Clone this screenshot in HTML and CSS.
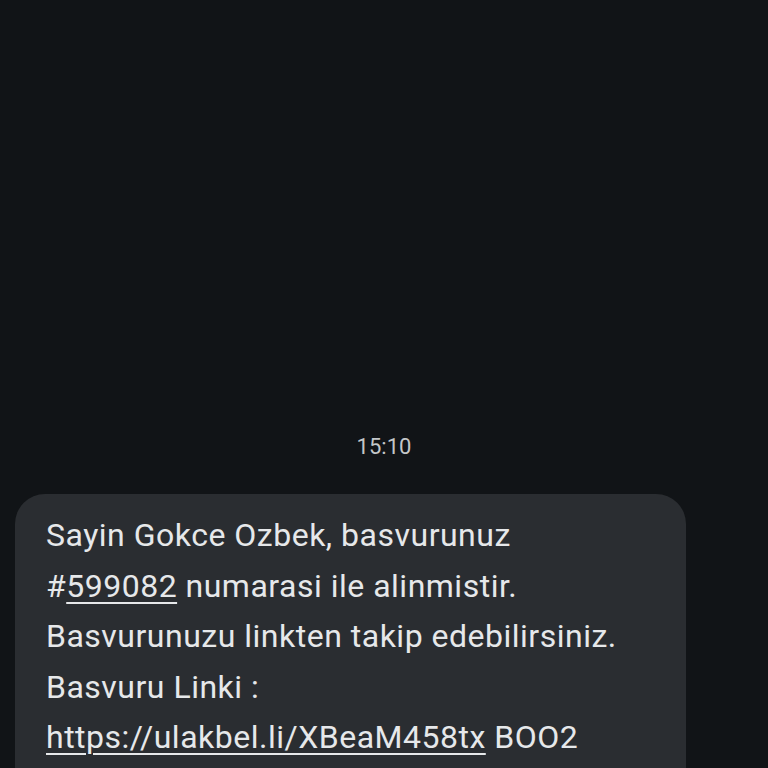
FILE: index.html
```html
<!DOCTYPE html>
<html>
<head>
<meta charset="utf-8">
<link rel="stylesheet" href="styles.css">
</head>
<body>
<div class="screen">
  <div class="time">15:10</div>
  <div class="bubble">
    <p class="msg">Sayin Gokce Ozbek, basvurunuz<br>#<span class="link">599082</span> numarasi ile alinmistir.<br>Basvurunuzu linkten takip edebilirsiniz.<br>Basvuru Linki :<br><span class="link">https://ulakbel.li/XBeaM458tx</span> BOO2</p>
  </div>
</div>
</body>
</html>
```

FILE: styles.css
```css
html, body {
  margin: 0;
  padding: 0;
  background: #111417;
}
.screen {
  width: 768px;
  height: 768px;
  overflow: hidden;
  background: #111417;
  font-family: Roboto, "Noto Sans", sans-serif;
  padding-top: 433px;
  box-sizing: border-box;
}
.time {
  text-align: center;
  color: #c4c7c9;
  font-size: 22px;
  line-height: 28px;
}
.bubble {
  margin-top: 33px;
  margin-left: 15px;
  width: 671px;
  height: 320px;
  background: #2a2d31;
  border-radius: 30px;
  box-sizing: border-box;
  padding: 16px 0 0 31px;
}
.msg {
  margin: 0;
  color: #e6e8ea;
  font-size: 32px;
  letter-spacing: 0.5px;
  line-height: 50.5px;
}
.link {
  text-decoration: underline;
  text-decoration-thickness: 2px;
  text-underline-offset: 5px;
}
```
